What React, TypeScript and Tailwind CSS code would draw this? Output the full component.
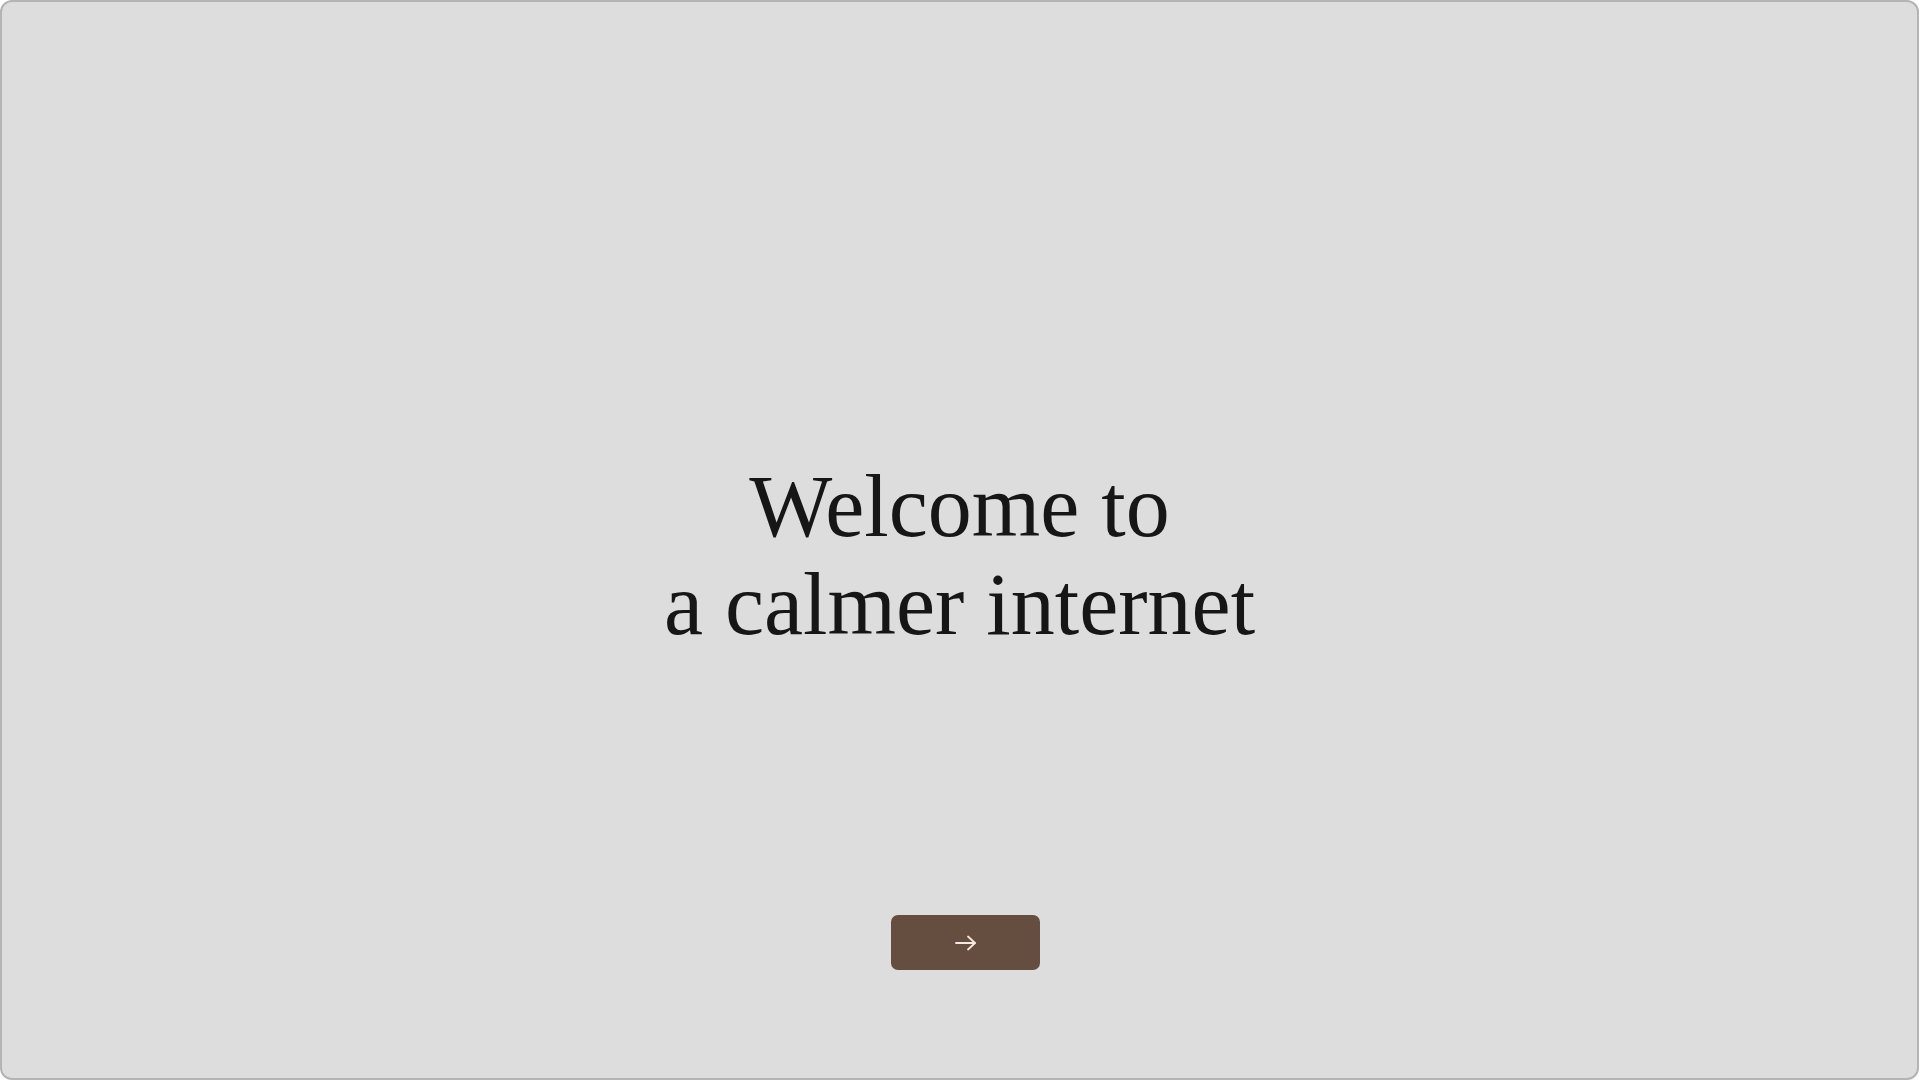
import React from 'react';

const ArrowIcon: React.FC = () => (
  <svg width="26" height="20" viewBox="0 0 26 20" fill="none" stroke="currentColor" strokeWidth={1.8} strokeLinecap="round" strokeLinejoin="round">
    <path d="M3 10h19" />
    <path d="M15 3.5l7 6.5-7 6.5" />
  </svg>
);

export default function App() {
  return (
    <div className="w-screen h-screen bg-white">
      <div className="w-full h-full flex flex-col items-center rounded-[12px] border-2 border-[#b4b4b4] bg-[#dddddd]">
        <div className="flex-1 flex items-center justify-center pt-[194px]">
          <h1 className="text-center text-[88px] leading-[98px] text-[#161616] font-['Liberation_Serif',serif]">
            Welcome to
            <br />
            a calmer internet
          </h1>
        </div>
        <button className="mb-[108px] ml-[12px] w-[149px] h-[55px] rounded-[7px] bg-[#654d3f] text-[#f3e9df] flex items-center justify-center">
          <ArrowIcon />
        </button>
      </div>
    </div>
  );
}
